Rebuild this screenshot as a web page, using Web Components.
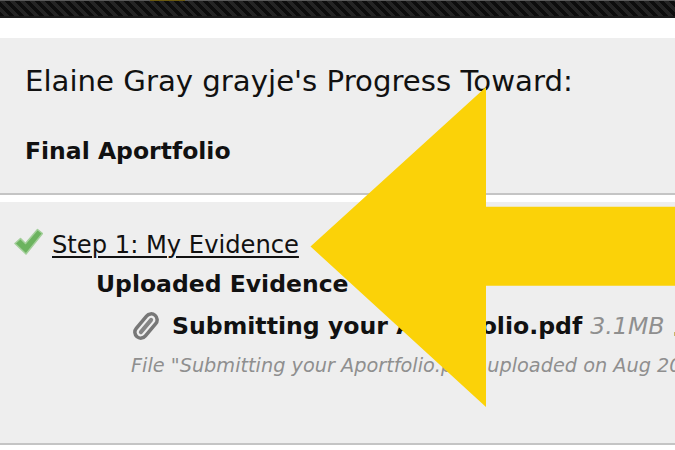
<!DOCTYPE html>
<html>
<head>
<meta charset="utf-8">
<title>Progress</title>
<style>
html, body { margin: 0; padding: 0; height: 100%; overflow: hidden; background: #fff; }
body { font-family: "DejaVu Sans", Verdana, sans-serif; color: #111; }
</style>
</head>
<body>
<top-bar></top-bar>
<progress-panel>
  <span slot="lead">Elaine Gray grayje's Progress Toward:</span>
  <span slot="title">Final Aportfolio</span>
</progress-panel>
<step-panel>
  <span slot="step">Step 1: My Evidence</span>
  <span slot="heading">Uploaded Evidence</span>
  <evidence-file name="Submitting your Aportfolio.pdf" size="3.1MB">File "Submitting your Aportfolio.pdf" uploaded on Aug 20</evidence-file>
</step-panel>
<big-arrow></big-arrow>

<script>
class TopBar extends HTMLElement {
  constructor() {
    super();
    this.attachShadow({ mode: 'open' }).innerHTML = `
<style>
:host { display: block; height: 18px; box-sizing: border-box; position: relative;
  border-top: 1px solid #5a5a5a; border-bottom: 2px solid #1a1a1a;
  background: repeating-linear-gradient(45deg, #0d0d0d 0 3.5px, #242424 3.5px 7px); }
.spot { position: absolute; left: 150px; top: -1px; width: 35px; height: 1px; background: #6b5a10; }
</style>
<div class="spot"></div>`;
  }
}
customElements.define('top-bar', TopBar);

class ProgressPanel extends HTMLElement {
  constructor() {
    super();
    this.attachShadow({ mode: 'open' }).innerHTML = `
<style>
:host { display: block; margin-top: 20px; height: 157px; box-sizing: border-box;
  background: #eee; border-bottom: 2px solid #c4c4c4; padding: 27px 25px 0; }
.lead { font-size: 29.200px; line-height: 32px; white-space: nowrap; }
.title { margin-top: 40px; font-size: 23.500px; line-height: 28px; font-weight: bold; white-space: nowrap; }
</style>
<div class="lead"><slot name="lead"></slot></div>
<div class="title"><slot name="title"></slot></div>`;
  }
}
customElements.define('progress-panel', ProgressPanel);

class StepPanel extends HTMLElement {
  constructor() {
    super();
    this.attachShadow({ mode: 'open' }).innerHTML = `
<style>
:host { display: block; margin-top: 7px; height: 243px; box-sizing: border-box;
  background: #eee; border-bottom: 2px solid #c4c4c4; padding-top: 26px; overflow: hidden; }
.step { display: flex; align-items: flex-start; gap: 9px; padding-left: 14px; height: 32px; }
.step svg { flex: none; }
.step a { font-size: 24.200px; line-height: 32px; padding-top: 1px; color: #111; text-decoration: underline; text-decoration-thickness: 2px; text-underline-offset: 3px; white-space: nowrap; }
.heading { margin-top: 8px; padding-left: 96px; font-size: 23.500px; line-height: 32px; font-weight: bold; white-space: nowrap; }
</style>
<div class="step">
  <svg width="29" height="27" viewBox="0 0 29 27">
    <path d="M1 15.500 L6.500 10.500 L11.500 15.500 L23.500 1.500 L28.500 5.500 L12 26 Z" fill="#6cb35f" stroke="#a3cf9a" stroke-width="1.500" stroke-linejoin="round"/>
  </svg>
  <a href="#"><slot name="step"></slot></a>
</div>
<div class="heading"><slot name="heading"></slot></div>
<slot></slot>`;
  }
}
customElements.define('step-panel', StepPanel);

class EvidenceFile extends HTMLElement {
  constructor() {
    super();
    const root = this.attachShadow({ mode: 'open' });
    root.innerHTML = `
<style>
:host { display: block; padding-left: 131px; margin-top: 10px; white-space: nowrap; }
.row { display: flex; align-items: center; gap: 13px; height: 32px; padding-left: 2px; }
.row svg { flex: none; }
.name { font-size: 23.600px; font-weight: bold; }
.size { font-size: 23.600px; font-style: italic; color: #8f8f8f; font-weight: normal; margin-left: 3px; }
.mark { display: inline-block; width: 3px; height: 4px; margin-left: 10px; margin-bottom: -2px; background: #c9b56a; }
.note { margin-top: 11px; font-size: 19.300px; line-height: 26px; font-style: italic; color: #8f8f8f; }
</style>
<div class="row">
  <svg width="26" height="30" viewBox="0 0 26 30" fill="none" stroke="#777" stroke-linecap="round" stroke-linejoin="round">
    <g transform="rotate(40 13 15)">
      <rect x="7" y="1" width="12" height="28" rx="6" stroke-width="3.500"/>
      <path d="M13 7 L13 23" stroke-width="4" stroke="#858585"/>
    </g>
  </svg>
  <span><span class="name"></span> <span class="size"></span><span class="mark"></span></span>
</div>
<div class="note"><slot></slot></div>`;
    root.querySelector('.name').textContent = this.getAttribute('name');
    root.querySelector('.size').textContent = this.getAttribute('size');
  }
}
customElements.define('evidence-file', EvidenceFile);

class BigArrow extends HTMLElement {
  constructor() {
    super();
    this.attachShadow({ mode: 'open' }).innerHTML = `
<style>
:host { position: absolute; left: 0; top: 0; width: 675px; height: 450px; display: block; pointer-events: none; }
svg { display: block; }
</style>
<svg width="675" height="450" viewBox="0 0 675 450"><polygon points="310.500,246.500 486,87 486,206.700 675,206.700 675,285.700 486,285.700 486,407" fill="#fbd208"/></svg>`;
  }
}
customElements.define('big-arrow', BigArrow);
</script>
</body>
</html>
